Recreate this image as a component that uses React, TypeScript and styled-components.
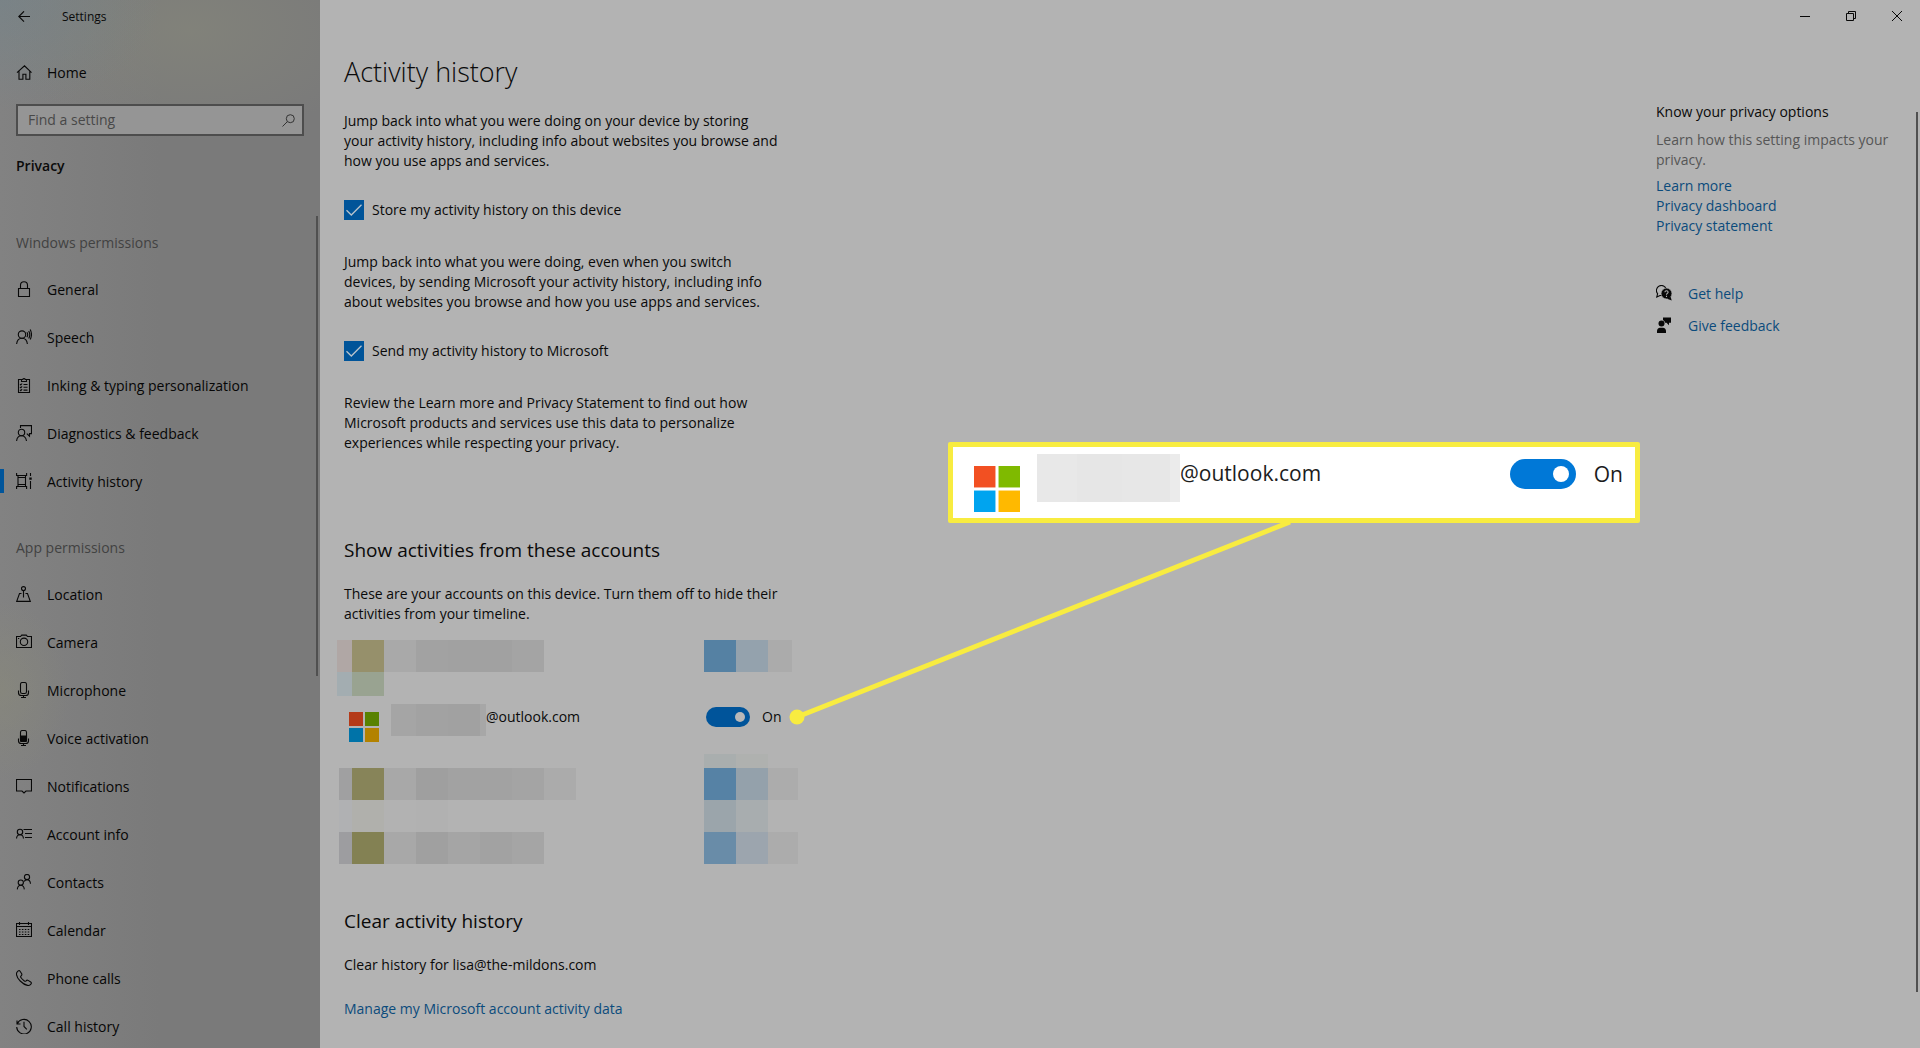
import React, { useState } from 'react';
import styled, { createGlobalStyle } from 'styled-components';

const GlobalStyle = createGlobalStyle`
  *, *::before, *::after { box-sizing: border-box; }
  body {
    margin: 0;
    background: #b3b3b3;
    color: #0a0a0a;
    font-family: "Open Sans", "Noto Sans", sans-serif;
    font-size: 14px;
    line-height: 20px;
  }
  h1, h2, h3, p, ul { margin: 0; padding: 0; font-weight: 400; }
  ul { list-style: none; }
  a { text-decoration: none; }
  button, input { font: inherit; color: inherit; margin: 0; }
`;

const Window = styled.div`
  display: flex;
  height: 100vh;
  overflow: hidden;
  position: relative;
`;

/* ---------- sidebar ---------- */

const Sidebar = styled.aside`
  display: flex;
  flex-direction: column;
  flex: 0 0 320px;
  background:
    radial-gradient(160px 110px at 0 0, rgba(116, 132, 138, 0.6), transparent),
    radial-gradient(190px 110px at 190px 30px, rgba(134, 135, 122, 0.6), transparent),
    radial-gradient(70px 90px at 0 690px, rgba(138, 138, 120, 0.5), transparent),
    linear-gradient(90deg, #828282, #7a7a7a 50%);
`;

const SideTitle = styled.header`
  display: flex;
  align-items: center;
  height: 32px;
  padding: 2px 0 0 1px;
  gap: 15px;
  font-size: 12px;
`;

const BackButton = styled.button`
  display: grid;
  place-items: center;
  width: 46px;
  height: 30px;
  padding: 0;
  border: 0;
  background: none;
`;

const NavLink = styled.a<{ $active?: boolean }>`
  display: flex;
  align-items: center;
  gap: 15px;
  height: 48px;
  padding: 0 16px;
  color: #060606;
  position: relative;
  svg { margin-bottom: 2px; }
  &::before {
    content: "";
    display: ${(p) => (p.$active ? 'block' : 'none')};
    position: absolute;
    left: 0;
    top: 11px;
    width: 4px;
    height: 24px;
    background: #00559b;
  }
`;

const HomeArea = styled.div`
  padding-top: 17px;
`;

const SearchBox = styled.label`
  display: flex;
  align-items: center;
  margin: 7px 16px 0;
  height: 32px;
  padding: 0 7px 0 10px;
  border: 2px solid #4d4d4d;
  background: #959595;
`;

const SearchInput = styled.input`
  flex: 1;
  min-width: 0;
  padding: 0;
  border: 0;
  outline: 0;
  background: none;
  &::placeholder { color: #484848; opacity: 1; }
`;

const SideHeading = styled.h2`
  margin: 20px 16px 25px;
  font-size: 14px;
  font-weight: 600;
`;

const NavArea = styled.nav`
  flex: 1;
  min-height: 0;
  position: relative;
  overflow: hidden;
`;

const GroupLabel = styled.h3`
  padding: 32px 16px 13px;
  font-size: 14px;
  color: #424242;
`;

const SideThumb = styled.div`
  position: absolute;
  right: 2px;
  top: 15px;
  bottom: 372px;
  width: 2px;
  background: #505050;
`;

/* ---------- main ---------- */

const Main = styled.main`
  display: flex;
  flex-direction: column;
  flex: 1;
  min-width: 0;
`;

const WindowBar = styled.div`
  display: flex;
  justify-content: flex-end;
  height: 32px;
`;

const WindowButton = styled.button`
  display: grid;
  place-items: center;
  width: 46px;
  height: 32px;
  padding: 0;
  border: 0;
  background: none;
`;

const Body = styled.div`
  display: flex;
  flex: 1;
  min-height: 0;
  position: relative;
`;

const Content = styled.div`
  flex: 1;
  min-width: 0;
  padding: 22px 24px;
`;

const PageTitle = styled.h1`
  font-size: 27px;
  font-weight: 300;
  line-height: 36px;
  margin-bottom: 21px;
`;

const Section = styled.section`
  margin-bottom: 43px;
`;

const Intro = styled(Section)`
  margin-bottom: 83px;
`;

const SectionTitle = styled.h2`
  font-size: 19px;
  line-height: 28px;
  margin-bottom: 20px;
`;

const Text = styled.p`
  max-width: 460px;
`;

const Tick = styled.label`
  display: flex;
  align-items: center;
  gap: 8px;
  margin: 29px 0 32px;
  position: relative;
`;

const TickInput = styled.input`
  appearance: none;
  width: 20px;
  height: 20px;
  border: 2px solid #1a1a1a;
  &:checked { background: #005499; border-color: #005499; }
  &:not(:checked) + svg { display: none; }
`;

const TickMark = styled.svg`
  position: absolute;
  left: 0;
  top: 0;
  pointer-events: none;
`;

const Link = styled.a`
  color: #0b4b7c;
`;

const ManageLine = styled.p`
  margin-top: 24px;
`;

const AccountGrid = styled.div`
  display: grid;
  grid-template-columns: 368px 1fr;
  margin: 16px 0 0 -8px;
`;

const Strip = styled.div<{ $h?: number }>`
  display: flex;
  height: ${(p) => p.$h ?? 32}px;
  align-items: flex-start;
`;

const Lead = styled.div`
  display: flex;
  justify-content: flex-end;
  width: 16px;
`;

const Cell = styled.div<{ $c: string; $w?: number; $h?: number }>`
  width: ${(p) => p.$w ?? 32}px;
  height: ${(p) => p.$h ?? 32}px;
  background: ${(p) => p.$c};
`;

const AccountRow = styled.div`
  display: flex;
  align-items: flex-start;
  height: 50px;
  padding-left: 13px;
  line-height: 26px;
`;

const ToggleRow = styled.label`
  display: flex;
  align-items: center;
  gap: 12px;
  height: 26px;
  padding-left: 2px;
`;

const LogoBox = styled.span<{ $big?: boolean }>`
  display: block;
  margin: ${(p) => (p.$big ? '19px 17px 0 0' : '8px 12px 0 0')};
  line-height: 0;
`;

const Toggle = styled.input<{ $big?: boolean }>`
  appearance: none;
  display: flex;
  align-items: center;
  justify-content: flex-end;
  width: ${(p) => (p.$big ? 66 : 44)}px;
  height: ${(p) => (p.$big ? 30 : 20)}px;
  padding-right: ${(p) => (p.$big ? 7 : 5)}px;
  border-radius: 15px;
  background: ${(p) => (p.$big ? '#0078d7' : '#00549a')};
  &::before {
    content: "";
    width: ${(p) => (p.$big ? 16 : 10)}px;
    height: ${(p) => (p.$big ? 16 : 10)}px;
    border-radius: 50%;
    background: ${(p) => (p.$big ? '#fff' : '#b8b8b8')};
  }
  &:not(:checked) { justify-content: flex-start; padding-left: 5px; }
`;

/* ---------- help column ---------- */

const Help = styled.aside`
  flex: 0 0 264px;
  padding: 70px 16px 0 0;
`;

const Muted = styled.p`
  margin: 8px 0 6px;
  color: #565656;
`;

const LinkList = styled.ul`
  margin-bottom: 48px;
`;

const HelpLink = styled(Link)`
  display: flex;
  align-items: center;
  gap: 16px;
  margin-bottom: 12px;
  svg { margin-bottom: 2px; }
`;

const MainThumb = styled.div`
  position: absolute;
  right: 2px;
  top: 80px;
  bottom: 56px;
  width: 2px;
  background: #505050;
`;

/* ---------- annotation over the window ---------- */

const Pointer = styled.svg`
  position: absolute;
  left: 780px;
  top: 500px;
  pointer-events: none;
`;

const Callout = styled.div`
  position: absolute;
  left: 948px;
  top: 442px;
  display: flex;
  align-items: flex-start;
  width: 692px;
  height: 81px;
  padding: 0 12px 0 21px;
  border: 5px solid #f8ec40;
  border-radius: 2px;
  background: #fff;
  color: #1c1c1c;
  font-size: 21px;
  line-height: 30px;
`;

const CalloutMask = styled.div`
  display: flex;
  margin-top: 7px;
`;

const CalloutMail = styled.span`
  flex: 1;
  margin-top: 11px;
`;

const CalloutToggle = styled.label`
  display: flex;
  align-items: center;
  gap: 18px;
  margin-top: 12px;
`;

/* ---------- drawings ---------- */

const Glyph = ({ children }: { children: React.ReactNode }) => (
  <svg width="16" height="16" viewBox="0 0 16 16" fill="none" stroke="#080808" strokeWidth="1.1" aria-hidden="true">
    {children}
  </svg>
);

const micStand = 'M2.5 8.5v2.2c0 1.5 1 2.8 2.8 2.8h4.400c1.800 0 2.800-1.300 2.800-2.800V8.500M7.500 13.500v2M5 15.500h5';

const glyphs: Record<string, React.ReactNode> = {
  home: <path d="M1 8.6 8.500 1.800l7 6.800M3 7.200v8h3.900v-5h3v5h3.900v-8" />,
  lock: <path d="M2.5 7.500h11v8h-11zM4.500 7.500V4.300a3.500 3.500 0 0 1 7 0v3.200" />,
  speech: (
    <>
      <circle cx="6" cy="5.6" r="3.7" />
      <path d="M.6 15c.4-3.4 2.5-5.7 5.4-5.7s5 2.3 5.4 5.7" />
      <path d="M10.9 3.300c.9 1.400.9 3.400 0 4.800M12.700 1.900c1.300 2.300 1.300 5.400 0 7.600M14.200.6c1.600 3 1.600 6.800 0 9.800" />
    </>
  ),
  clipboard: (
    <>
      <path d="M5.500 2.500h-3v13h11v-13h-3M5.500 4.500v-2h1.200a1.400 1.400 0 0 1 2.600 0h1.200v2z" />
      <path d="M4 7.200l.8.8 1.300-1.500M4 10l.8.8 1.300-1.500M4 12.800l.8.8 1.300-1.500M7.500 7.500h4M7.500 10.300h4M7.500 13.100h4" />
    </>
  ),
  feedback: (
    <>
      <circle cx="5.500" cy="7.500" r="3.200" />
      <path d="M.6 16c.3-3.200 2.200-5.200 4.900-5.200S10 12.800 10.500 16M4.500 3V.6h11v8h-2v2.600L10.800 8.600" />
    </>
  ),
  activity: (
    <>
      <path d="M.6 0v2.500h10V0M2 4.500h7.500v7H2zM.6 16v-2.500h10V16M2 2.500v11M9.500 2.500v11M14.500 0v3M14.500 8v8" />
      <path d="M13.300 4.600h2.400v2.200h-2.400z" fill="#080808" stroke="none" />
    </>
  ),
  location: (
    <>
      <circle cx="7.500" cy="2.600" r="2" />
      <path d="M7.500 4.600v7M5.500 7.500H3.500L.7 15.400h13.600l-2.800-7.900h-2" />
    </>
  ),
  camera: (
    <>
      <path d="M.5 2.500h4l1.200-1.400h4.600l1.200 1.400h4v11H.5z" />
      <circle cx="8" cy="7.800" r="3.700" />
      <path d="M2 4.500h1.200" />
    </>
  ),
  mic: (
    <>
      <rect x="4.500" y=".5" width="6" height="11" rx="1.800" />
      <path d={micStand} />
    </>
  ),
  voice: (
    <>
      <rect x="4.500" y=".5" width="6" height="11" rx="1.800" />
      <path d="M4.500 6h6v4.500a1 1 0 0 1-1 1h-4a1 1 0 0 1-1-1z" fill="#080808" />
      <path d={micStand} />
    </>
  ),
  notify: <path d="M.5 1.500h15v11.500h-5.500L8 15l-2-2H.5z" />,
  account: (
    <>
      <circle cx="4" cy="6" r="2.700" />
      <path d="M.5 12.500c.2-2.400 1.600-3.800 3.500-3.800s3.300 1.400 3.500 3.800M7.500 3.500H16M9 7.500h7M9 11.500h7" />
    </>
  ),
  contacts: (
    <>
      <circle cx="4.800" cy="8.600" r="2.600" />
      <path d="M1.300 15.400c.2-2.600 1.500-4.200 3.500-4.200s3.300 1.600 3.500 4.200" />
      <circle cx="11" cy="3" r="2.600" />
      <path d="M8.200 7.500c.6-1.300 1.600-1.900 2.800-1.900 2 0 3.300 1.600 3.500 4.200" />
    </>
  ),
  calendar: (
    <>
      <path d="M.5 1.500h15v13H.5zM.5 4.500h15M3.500 0v3M12.500 0v3" />
      <path d="M3 7.500h10.500M3 10h10.500M3 12.500h10.500" strokeDasharray="1.500 1.400" />
    </>
  ),
  phone: (
    <path d="M1.200 1.800C2 .8 3.200.2 3.900 1l1.800 2.800c.4.800.1 1.400-.6 2-.6.500-.7 1 0 2 .8 1.200 1.800 2.100 3 3 .9.600 1.400.6 2 0 .600-.7 1.200-.9 2-.4l2.600 1.600c.9.600.9 1.300.2 2.100-.9 1.100-2 1.600-3.400 1.300-2.500-.5-5.200-2.300-7.300-4.400C2.200 9 .8 6.500.5 4.600.4 3.500.6 2.500 1.200 1.800z" />
  ),
  history: <path d="M1 2.500v3.500h3.500M1.300 5.800A7.300 7.300 0 1 1 .7 9M8 3.800v4.700l2.800 2.800" />,
  getHelp: (
    <>
      <path d="M1.600 8.700A5 5 0 1 1 5.400 10.500H4L.8 12z" />
      <circle cx="10.500" cy="8.500" r="5.400" fill="#080808" stroke="#b3b3b3" strokeWidth=".6" />
      <path d="M14.500 11.500l1.200 4-4.700-1.800z" fill="#080808" stroke="none" />
      <path d="M8.900 7.200c0-2 3.200-2 3.200 0 0 1.200-1.600 1.200-1.600 2.500M10.500 10.700v1.200" stroke="#b3b3b3" />
    </>
  ),
  give: (
    <>
      <circle cx="5.500" cy="6.600" r="3" fill="#080808" stroke="none" />
      <path d="M7 .5h8v5.300h-2v2.400l-2.500-2.400H9.200A4 4 0 0 0 7 2.900zM1 16v-2c0-2 1.300-3.300 3-3.300h3c1.800 0 3 1.300 3 3.300v2z" fill="#080808" stroke="none" />
    </>
  ),
};

const MicrosoftLogo = ({ size, bright }: { size: number; bright?: boolean }) => {
  const c = bright ? ['#f25022', '#7fba00', '#00a4ef', '#ffb900'] : ['#b43a18', '#588200', '#0073a8', '#b38200'];
  return (
    <svg width={size} height={size} viewBox="0 0 30 30" role="img" aria-label="Microsoft">
      <path fill={c[0]} d="M0 0h14v14H0z" />
      <path fill={c[1]} d="M16 0h14v14H16z" />
      <path fill={c[2]} d="M0 16h14v14H0z" />
      <path fill={c[3]} d="M16 16h14v14H16z" />
    </svg>
  );
};

/* ---------- data ---------- */

const groups = [
  {
    label: 'Windows permissions',
    items: [
      ['General', 'lock'],
      ['Speech', 'speech'],
      ['Inking & typing personalization', 'clipboard'],
      ['Diagnostics & feedback', 'feedback'],
      ['Activity history', 'activity'],
    ],
  },
  {
    label: 'App permissions',
    items: [
      ['Location', 'location'],
      ['Camera', 'camera'],
      ['Microphone', 'mic'],
      ['Voice activation', 'voice'],
      ['Notifications', 'notify'],
      ['Account info', 'account'],
      ['Contacts', 'contacts'],
      ['Calendar', 'calendar'],
      ['Phone calls', 'phone'],
      ['Call history', 'history'],
    ],
  },
];

type StripSpec = { h?: number; cell?: number; lead?: [number, string]; left: string[]; right: [number, string][] };

const above: StripSpec[] = [
  { lead: [15, '#b0a7a5'], left: ['#96906b', '#a9a9a9', '#a2a2a2', '#a1a1a1', '#a1a1a1', '#a4a4a4'], right: [[32, '#5581a3'], [32, '#94a2ad'], [24, '#ababab']] },
  { cell: 24, lead: [15, '#a3adb1'], left: ['#99a391'], right: [] },
];

const below: StripSpec[] = [
  { h: 14, cell: 14, left: [], right: [[32, '#a9aeae'], [32, '#afb1af']] },
  { lead: [13, '#a0a0a1'], left: ['#878459', '#a8a8a8', '#9f9f9f', '#a2a2a2', '#a2a2a2', '#a4a4a4', '#ababab'], right: [[32, '#5682a5'], [32, '#94a1ab'], [30, '#acacac']] },
  { lead: [13, '#b0b1b3'], left: ['#b0b0ac', '#b2b2b2', '#b1b1b1'], right: [[32, '#9ba5ab'], [32, '#a8adaf']] },
  { lead: [13, '#9d9da0'], left: ['#838153', '#a8a8a8', '#a0a0a0', '#a5a5a5', '#a2a2a2', '#a5a5a5'], right: [[32, '#698ca8'], [32, '#9ca5ae'], [30, '#acacac']] },
];

const MaskedRows = ({ rows }: { rows: StripSpec[] }) => (
  <>
    {rows.map((r, i) => (
      <React.Fragment key={i}>
        <Strip $h={r.h}>
          <Lead>{r.lead && <Cell $w={r.lead[0]} $h={r.cell} $c={r.lead[1]} />}</Lead>
          {r.left.map((c, j) => (
            <Cell key={j} $c={c} $h={r.cell} />
          ))}
        </Strip>
        <Strip $h={r.h}>
          {r.right.map(([w, c], j) => (
            <Cell key={j} $w={w} $c={c} $h={r.cell} />
          ))}
        </Strip>
      </React.Fragment>
    ))}
  </>
);

const CheckOption = ({ label }: { label: string }) => {
  const [on, setOn] = useState(true);
  return (
    <Tick>
      <TickInput type="checkbox" checked={on} onChange={() => setOn(!on)} />
      <TickMark width="20" height="20" viewBox="0 0 20 20" fill="none" stroke="#b9c4cc" strokeWidth="1.3">
        <path d="M2.500 10.300 7.300 15 17.500 4.800" />
      </TickMark>
      {label}
    </Tick>
  );
};

export default function App() {
  const [synced, setSynced] = useState(true);
  const flip = () => setSynced(!synced);
  const state = synced ? 'On' : 'Off';

  return (
    <>
      <GlobalStyle />
      <Window>
        <Sidebar>
          <SideTitle>
            <BackButton aria-label="Back">
              <svg width="12" height="12" viewBox="0 0 12 12" fill="none" stroke="#080808" strokeWidth="1.1">
                <path d="M12 5.500H.8M6 .3.800 5.500 6 10.700" />
              </svg>
            </BackButton>
            Settings
          </SideTitle>
          <HomeArea>
            <NavLink href="#home">
              <Glyph>{glyphs.home}</Glyph>
              Home
            </NavLink>
          </HomeArea>
          <SearchBox>
            <SearchInput type="search" placeholder="Find a setting" aria-label="Find a setting" />
            <svg width="13" height="13" viewBox="0 0 13 13" fill="none" stroke="#333" aria-hidden="true">
              <circle cx="8.300" cy="4.700" r="4" />
              <path d="M5.400 7.600.5 12.500" />
            </svg>
          </SearchBox>
          <SideHeading>Privacy</SideHeading>
          <NavArea>
            {groups.map((g) => (
              <div key={g.label}>
                <GroupLabel>{g.label}</GroupLabel>
                <ul>
                  {g.items.map(([name, icon]) => (
                    <li key={name}>
                      <NavLink href="#page" $active={name === 'Activity history'}>
                        <Glyph>{glyphs[icon]}</Glyph>
                        {name}
                      </NavLink>
                    </li>
                  ))}
                </ul>
              </div>
            ))}
            <SideThumb />
          </NavArea>
        </Sidebar>

        <Main>
          <WindowBar>
            <WindowButton aria-label="Minimize">
              <svg width="10" height="10" stroke="#080808"><path d="M0 5.500h10" /></svg>
            </WindowButton>
            <WindowButton aria-label="Restore">
              <svg width="10" height="10" fill="none" stroke="#080808"><path d="M.5 2.500h7v7h-7zM2.500 2.500v-2h7v7h-2" /></svg>
            </WindowButton>
            <WindowButton aria-label="Close">
              <svg width="10" height="10" stroke="#080808"><path d="M0 0l10 10M10 0 0 10" /></svg>
            </WindowButton>
          </WindowBar>
          <Body>
            <Content>
              <PageTitle>Activity history</PageTitle>
              <Intro>
                <Text>
                  Jump back into what you were doing on your device by storing<br />
                  your activity history, including info about websites you browse and<br />
                  how you use apps and services.
                </Text>
                <CheckOption label="Store my activity history on this device" />
                <Text>
                  Jump back into what you were doing, even when you switch<br />
                  devices, by sending Microsoft your activity history, including info<br />
                  about websites you browse and how you use apps and services.
                </Text>
                <CheckOption label="Send my activity history to Microsoft" />
                <Text>
                  Review the Learn more and Privacy Statement to find out how<br />
                  Microsoft products and services use this data to personalize<br />
                  experiences while respecting your privacy.
                </Text>
              </Intro>
              <Section>
                <SectionTitle>Show activities from these accounts</SectionTitle>
                <Text>
                  These are your accounts on this device. Turn them off to hide their<br />
                  activities from your timeline.
                </Text>
                <AccountGrid>
                  <MaskedRows rows={above} />
                  <AccountRow>
                    <LogoBox><MicrosoftLogo size={30} /></LogoBox>
                    <Cell $w={25} $c="#a5a5a5" />
                    <Cell $c="#a2a2a2" />
                    <Cell $c="#a1a1a1" />
                    <Cell $w={6} $c="#a7a7a7" />
                    <span>@outlook.com</span>
                  </AccountRow>
                  <ToggleRow>
                    <Toggle type="checkbox" role="switch" checked={synced} onChange={flip} />
                    {state}
                  </ToggleRow>
                  <MaskedRows rows={below} />
                </AccountGrid>
              </Section>
              <Section>
                <SectionTitle>Clear activity history</SectionTitle>
                <Text>Clear history for lisa@the-mildons.com</Text>
                <ManageLine>
                  <Link href="#manage">Manage my Microsoft account activity data</Link>
                </ManageLine>
              </Section>
            </Content>
            <Help>
              <p>Know your privacy options</p>
              <Muted>Learn how this setting impacts your privacy.</Muted>
              <LinkList>
                <li><Link href="#learn">Learn more</Link></li>
                <li><Link href="#dashboard">Privacy dashboard</Link></li>
                <li><Link href="#statement">Privacy statement</Link></li>
              </LinkList>
              <HelpLink href="#help"><Glyph>{glyphs.getHelp}</Glyph>Get help</HelpLink>
              <HelpLink href="#feedback"><Glyph>{glyphs.give}</Glyph>Give feedback</HelpLink>
            </Help>
            <MainThumb />
          </Body>
        </Main>

        <Pointer width="530" height="240" viewBox="0 0 530 240">
          <path d="M17 217 510 22" stroke="#f8ec40" strokeWidth="5" />
          <circle cx="17" cy="217" r="7.500" fill="#f8ec40" />
        </Pointer>
        <Callout>
          <LogoBox $big><MicrosoftLogo size={46} bright /></LogoBox>
          <CalloutMask>
            <Cell $w={40} $h={48} $c="#e8e8e8" />
            <Cell $w={45} $h={48} $c="#e6e6e6" />
            <Cell $w={48} $h={48} $c="#e7e7e7" />
            <Cell $w={10} $h={48} $c="#ebebeb" />
          </CalloutMask>
          <CalloutMail>@outlook.com</CalloutMail>
          <CalloutToggle>
            <Toggle $big type="checkbox" role="switch" checked={synced} onChange={flip} />
            {state}
          </CalloutToggle>
        </Callout>
      </Window>
    </>
  );
}
